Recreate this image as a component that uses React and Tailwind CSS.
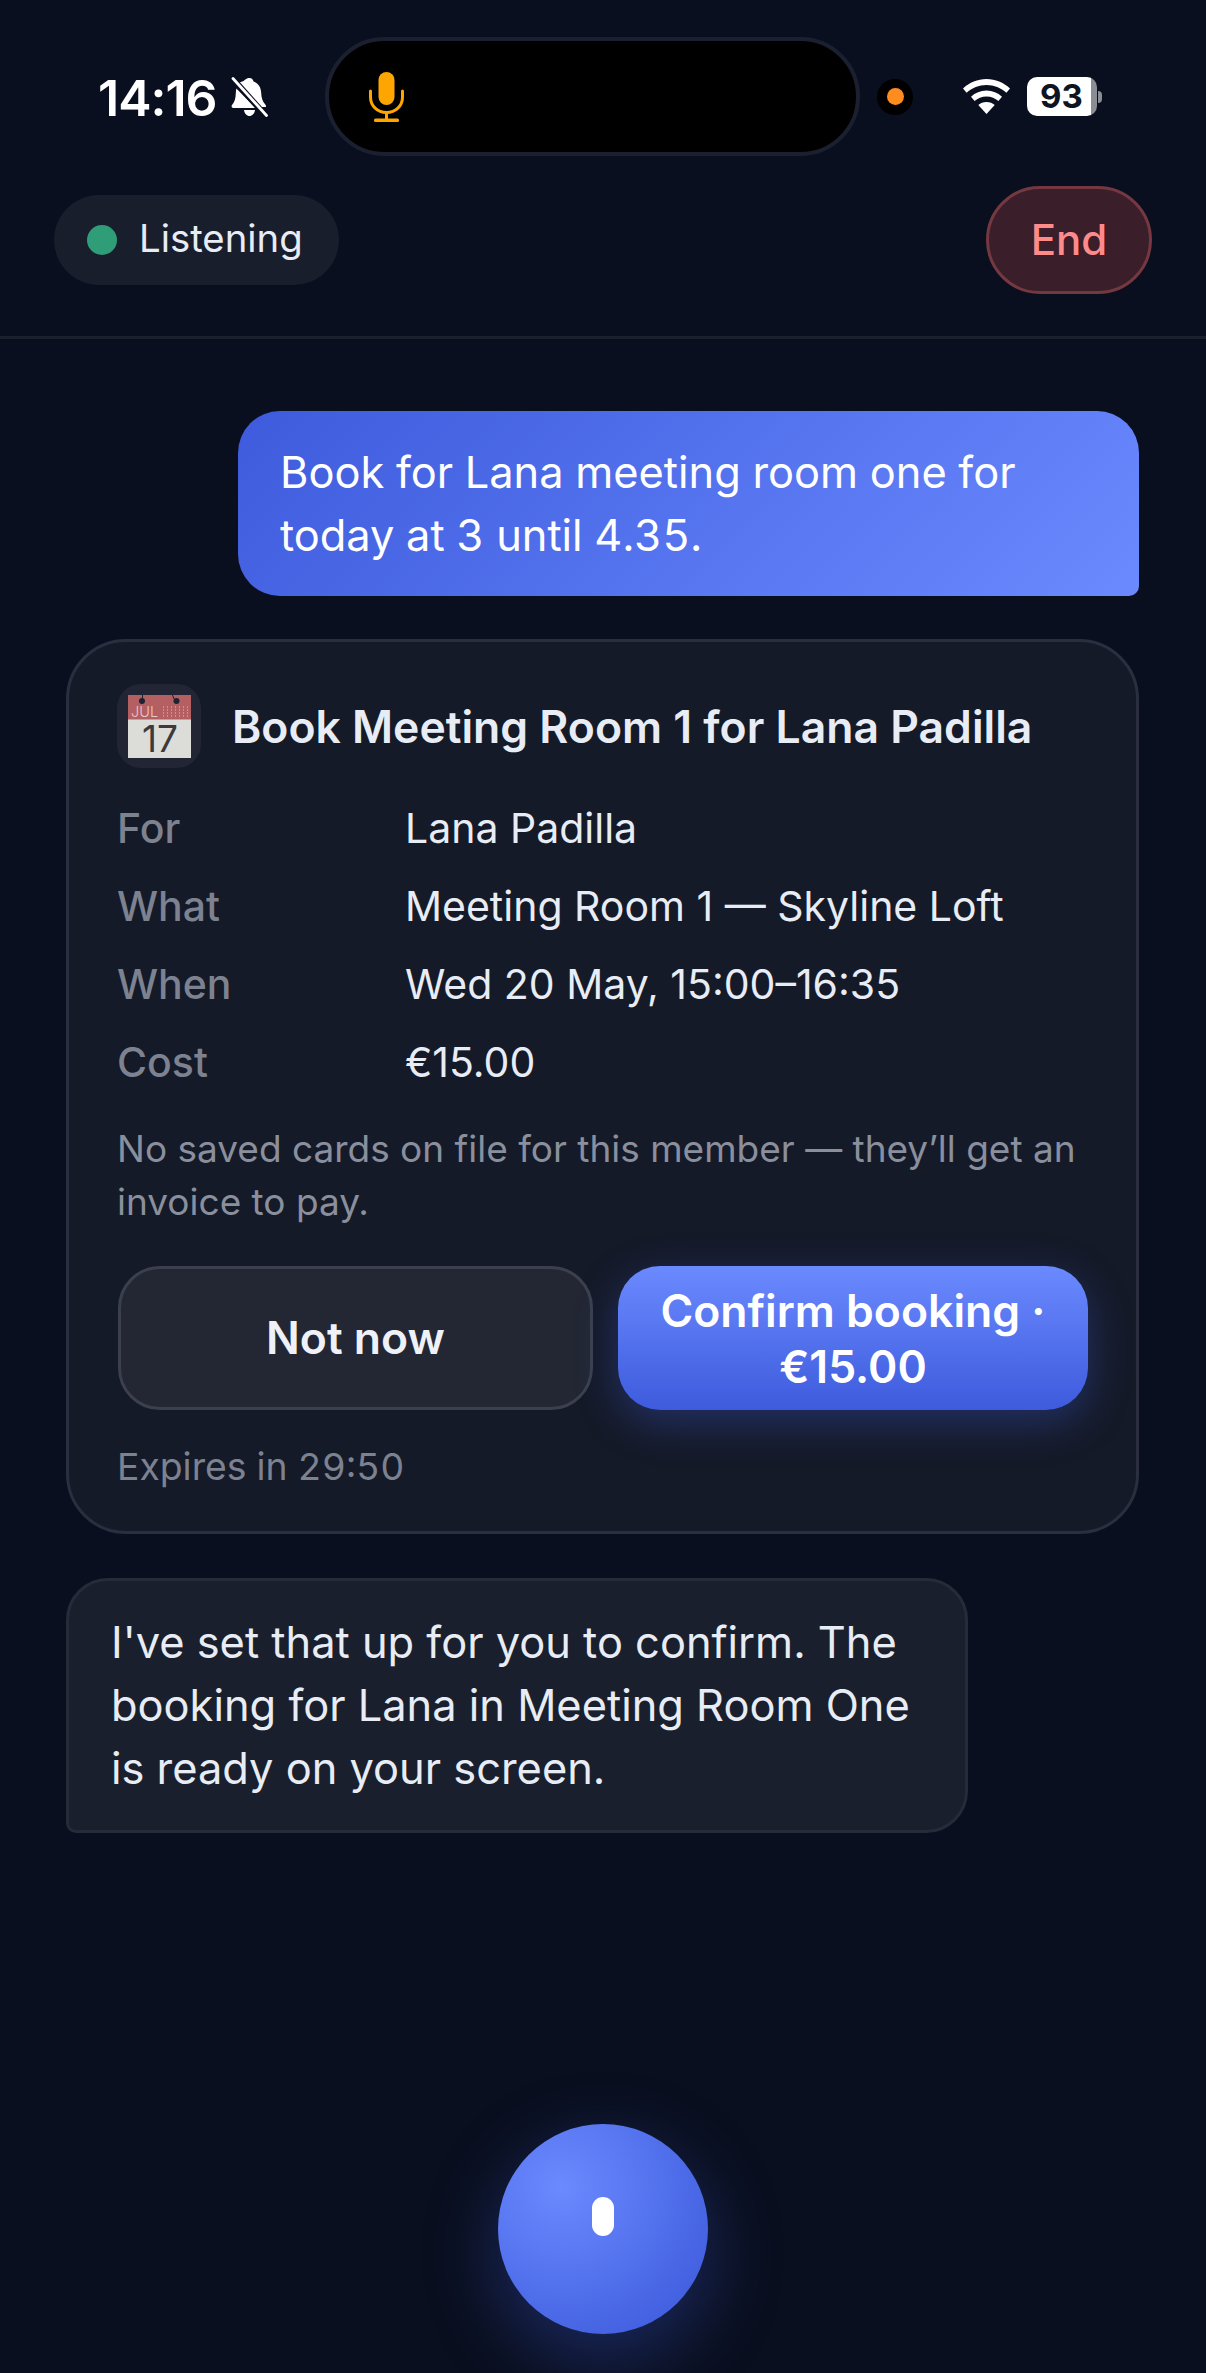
import React from "react";

function BellSlash() {
  return (
    <svg width="37" height="40" viewBox="0 0 37 40">
      <path d="M18.500 1c2.200 0 3.700 1.500 4 3.600 5 1.600 7.500 6 7.700 11.400.1 4.600 1.300 8.400 3.900 11.300.9 1 1.100 1.900.8 2.600H27.500L7.500 6.500C8.500 5.600 9.800 5 11.100 4.600 14 3.800 14.500 1 18.500 1zM5.400 11.500 24.500 31H2.300c-1.500 0-2.400-1.700-1.100-3.200 2.400-2.700 3.400-6 3.600-11.500.1-1.800.2-3.300.6-4.800zM13 33h11c-.4 3.500-2.800 6-5.500 6S13.400 36.500 13 33z" fill="#fff" />
      <path d="M2 2 35 39" stroke="#0a0f1f" strokeWidth="6" />
      <path d="M2 1.500 35.500 38.500" stroke="#fff" strokeWidth="2.800" strokeLinecap="round" />
    </svg>
  );
}

function Mic() {
  return (
    <svg width="35" height="50" viewBox="0 0 35 50">
      <rect x="9.500" y="0" width="16" height="33" rx="8" fill="#ffa500" />
      <path d="M1.500 19v6c0 9 7 15.500 16 15.500S33.500 34 33.500 25v-6" fill="none" stroke="#ffa500" strokeWidth="3" strokeLinecap="round" />
      <rect x="16" y="40" width="3" height="7" fill="#ffa500" />
      <rect x="5" y="46.500" width="25" height="3.500" rx="1.500" fill="#ffa500" />
    </svg>
  );
}

function Wifi() {
  return (
    <svg width="47" height="35" viewBox="0 0 47 35">
      <path d="M23.500 0C32.500 0 40.500 3.500 47 9.500l-3.600 4.300C38 8.800 31 6 23.500 6S9 8.800 3.600 13.800L0 9.500C6.500 3.500 14.500 0 23.500 0z" fill="#fff" />
      <path d="M23.500 11.500c6 0 11.300 2.300 15.500 6.200l-3.600 4.300c-3.100-2.900-7.200-4.600-11.900-4.600s-8.800 1.700-11.900 4.600L8 17.700c4.200-3.900 9.500-6.200 15.500-6.200z" fill="#fff" />
      <path d="M23.500 23c3.300 0 6 1.100 8.200 3.100L23.500 35l-8.200-8.900c2.200-2 4.900-3.100 8.200-3.100z" fill="#fff" />
    </svg>
  );
}

function CalendarIcon() {
  return (
    <svg width="63" height="63" viewBox="0 0 63 63" className="overflow-visible">
      <rect x="0" y="0" width="63" height="63" fill="#dcdcd9" />
      <rect x="0" y="0" width="63" height="24.500" fill="#b45f62" />
      <path d="M14.500 0v4M44.500 0l1.500 4" stroke="#1d2233" strokeWidth="1" />
      <circle cx="14" cy="6" r="3" fill="#1d2233" />
      <circle cx="48.500" cy="6" r="3" fill="#1d2233" />
      <text x="3" y="21.500" fontFamily="Inter, sans-serif" fontSize="14.500" fontWeight="300" fill="#e8c8c8">JUL</text>
      <g fill="#cd9092">
        {[35, 39, 43, 47, 51, 55, 59].map((x) =>
          [11, 14, 17, 20].map((y) => <rect key={x + "-" + y} x={x} y={y} width="1" height="2" />)
        )}
      </g>
      <text x="32" y="56.500" textAnchor="middle" fontFamily="Inter, sans-serif" fontSize="37" fill="#3b3b3b">17</text>
    </svg>
  );
}

function Row({ label, value }) {
  return (
    <>
      <div className="text-[#7d8291] font-medium">{label}</div>
      <div className="text-[#e8ecf5]">{value}</div>
    </>
  );
}

export default function App() {
  return (
    <div className="w-[1206px] h-[2373px] flex flex-col bg-[#0a0f1f] overflow-hidden [font-family:Inter,sans-serif]">
      {/* status bar */}
      <div className="h-[186px] shrink-0 flex items-start pt-[37px] pl-[98px]">
        <div className="h-[119px] flex items-center w-[227px] shrink-0">
          <span className="w-[133px] pt-[2px] text-[50px] font-semibold text-white tracking-[-1px] leading-none">14:16</span>
          <BellSlash />
        </div>
        <div className="w-[535px] h-[119px] shrink-0 rounded-full bg-black border-4 border-[#1a2030] flex items-center pl-[40px]">
          <Mic />
        </div>
        <div className="h-[119px] flex items-center ml-[17px]">
          <div className="w-[36px] h-[36px] rounded-full bg-black flex items-center justify-center">
            <div className="w-[17px] h-[17px] rounded-full bg-[#ff8c1f]" />
          </div>
          <div className="ml-[50px]"><Wifi /></div>
          <div className="ml-[17px] flex items-center">
            <div className="w-[70px] h-[39px] rounded-[10px] bg-[linear-gradient(90deg,#fff_0,#fff_92%,#8a8d94_92%)] flex items-center pl-[13px] text-[33px] font-bold text-[#0f1422] leading-none">93</div>
            <div className="ml-[1px] w-[4px] h-[12px] rounded-r-full bg-[#8a8d94]" />
          </div>
        </div>
      </div>

      {/* header */}
      <div className="h-[153px] shrink-0 flex items-start justify-between px-[54px] border-b-[3px] border-[#1a202d]">
        <div className="mt-[9px] h-[90px] w-[285px] rounded-full bg-[#181e2b] flex items-center pl-[33px] gap-[22px]">
          <div className="w-[30px] h-[30px] rounded-full bg-[#2f9e78]" />
          <span className="text-[38.300px] text-[#e8ecf5] leading-none -translate-y-[2px]">Listening</span>
        </div>
        <div className="w-[166px] h-[108px] rounded-full bg-[#3a1e2a] border-[3px] border-[#753840] flex items-center justify-center text-[42px] font-medium text-[#ff8a8a] leading-none">End</div>
      </div>

      {/* messages */}
      <div className="flex flex-col pl-[66px] pr-[67px] pt-[72px]">
        <div className="self-end w-[901px] rounded-[42px] rounded-br-[10px] bg-[linear-gradient(135deg,#3d5bdc,#6b8aff)] px-[42px] py-[30px] text-[43.400px] leading-[62.500px] text-white tabular-nums">
          Book for Lana meeting room one for today at 3 until 4.35.
        </div>

        <div className="mt-[43px] rounded-[60px] border-[3px] border-[#2a2e3e] bg-[#151a28] px-[48px] pt-[42px] pb-[40px]">
          <div className="flex items-center gap-[31px]">
            <div className="w-[84px] h-[84px] rounded-[24px] bg-[#222634] flex items-center justify-center">
              <CalendarIcon />
            </div>
            <div className="mt-[2px] text-[44.500px] font-semibold text-[#e8ecf5] leading-[63px]">Book Meeting Room 1 for Lana Padilla</div>
          </div>
          <div className="mt-[29px] grid grid-cols-[288px_1fr] gap-y-[15px] text-[41px] leading-[63px]">
            <Row label="For" value="Lana Padilla" />
            <Row label="What" value="Meeting Room 1 — Skyline Loft" />
            <Row label="When" value="Wed 20 May, 15:00–16:35" />
            <Row label="Cost" value="€15.00" />
          </div>
          <div className="mt-[28px] text-[37px] leading-[53px] text-[#8a8f9d]">
            No saved cards on file for this member — they’ll get an invoice to pay.
          </div>
          <div className="mt-[38px] ml-[1px] flex gap-[25px]">
            <div className="w-[476px] h-[144px] pt-[1px] rounded-[42px] border-[3px] border-[#3c404e] bg-[#232734] flex items-center justify-center text-[44.500px] font-semibold text-[#eef1f7]">
              Not now
            </div>
            <div className="w-[471px] h-[144px] pt-[1px] rounded-[42px] bg-[linear-gradient(180deg,#6b8aff,#3d5bdc)] shadow-[0_12px_42px_rgba(61,91,220,0.35)] flex items-center justify-center text-center text-[44.500px] leading-[56px] font-semibold text-white px-[30px]">
              Confirm booking · €15.00
            </div>
          </div>
          <div className="mt-[33px] text-[37.300px] leading-[48px] text-[#7d8291] tabular-nums">Expires in 29:50</div>
        </div>

        <div className="mt-[44px] w-[902px] rounded-[42px] rounded-bl-[10px] border-[3px] border-[#262b39] bg-[#1a1f2d] px-[42px] py-[30px] text-[43.400px] leading-[63px] text-[#e8ecf5]">
          I've set that up for you to confirm. The booking for Lana in Meeting Room One is ready on your screen.
        </div>
      </div>

      {/* mic button */}
      <div className="mt-auto pb-[39px] flex justify-center">
        <div className="w-[210px] h-[210px] rounded-full bg-[radial-gradient(circle_at_30%_30%,#6b8aff,#3d5bdc_90%)] shadow-[0_24px_72px_rgba(61,91,220,0.35)] flex justify-center pt-[73px]">
          <div className="w-[22px] h-[39px] rounded-full bg-white" />
        </div>
      </div>
    </div>
  );
}
